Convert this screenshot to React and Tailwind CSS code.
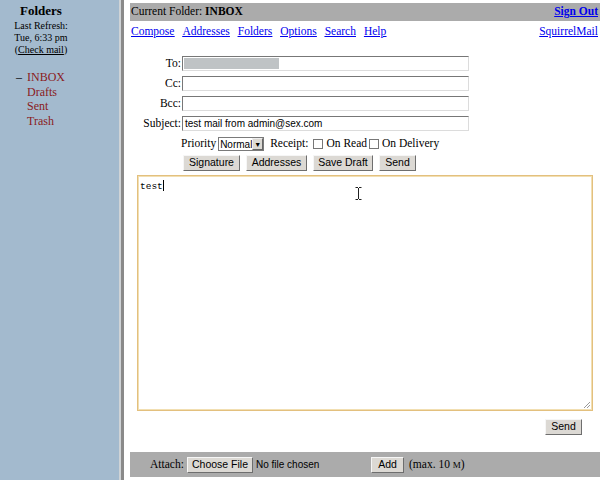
const serif = { fontFamily: '"Liberation Serif", "Times New Roman", serif' };

function Btn({ children, className = "" }) {
  return (
    <span
      className={`inline-flex h-[16px] shrink-0 items-center justify-center whitespace-nowrap border border-t-[#f6f6f6] border-l-[#f6f6f6] border-r-[#6e6e6e] border-b-[#6e6e6e] bg-[#dcd9d4] font-['Liberation_Sans',Arial,sans-serif] text-[10.5px] text-black ${className}`}
    >
      {children}
    </span>
  );
}

function Field({ label, children }) {
  return (
    <div className="flex h-[20px] items-start">
      <span className="w-[52px] pr-[1px] text-right text-[11.5px] leading-[15px]">{label}</span>
      <div className="flex h-[15px] w-[287px] items-center border border-t-[#777] border-l-[#777] border-r-[#dcdcdc] border-b-[#dcdcdc] bg-white font-['Liberation_Sans',Arial,sans-serif] text-[10px]">
        {children}
      </div>
    </div>
  );
}

function Box() {
  return <span className="inline-block h-[10px] w-[10px] shrink-0 border border-[#777] bg-white" />;
}

export default function App() {
  return (
    <div className="flex h-[480px] w-[600px] overflow-hidden bg-white text-black" style={serif}>
      <aside className="flex w-[119px] shrink-0 flex-col bg-[#a3bace] pt-[3px]">
        <div className="w-[82px] text-center">
          <div className="text-[13px] font-bold leading-[16px]">Folders</div>
          <div className="mt-[1px] text-[10px] leading-[12px]">Last Refresh:</div>
          <div className="text-[10px] leading-[12px]">Tue, 6:33 pm</div>
          <div className="text-[10px] leading-[12px]">
            (<span className="underline">Check mail</span>)
          </div>
        </div>
        <ul className="mt-[14px] pl-[16px] text-[12px] leading-[14.5px] text-[#8a1a22]">
          <li className="flex">
            <span className="w-[11px] text-black">–</span>
            <span>INBOX</span>
          </li>
          <li className="pl-[11px]">Drafts</li>
          <li className="pl-[11px]">Sent</li>
          <li className="pl-[11px]">Trash</li>
        </ul>
      </aside>
      <div className="w-[2px] shrink-0 bg-[#cfd3d6]" />
      <div className="w-[3px] shrink-0 bg-[#8a8a8a]" />

      <main className="flex min-w-0 flex-1 flex-col pl-[6px] pt-[3px]">
        <div className="flex h-[18px] items-center justify-between bg-[#ababab] pl-[1px] pr-[2px] text-[11.5px]">
          <span>
            Current Folder: <b>INBOX</b>
          </span>
          <a className="font-bold text-[#0000ee] underline">Sign Out</a>
        </div>
        <div className="mt-[3px] flex h-[14px] items-center justify-between pl-[1px] pr-[2px] text-[11.5px] leading-[14px]">
          <nav className="flex gap-[8px] text-[#0000ee] underline">
            <a>Compose</a>
            <a>Addresses</a>
            <a>Folders</a>
            <a>Options</a>
            <a>Search</a>
            <a>Help</a>
          </nav>
          <a className="text-[#0000ee] underline">SquirrelMail</a>
        </div>

        <div className="mt-[18px] flex flex-col">
          <Field label="To:">
            <span className="ml-[1px] h-[11px] w-[95px] bg-[#bfc3c5]" />
          </Field>
          <Field label="Cc:" />
          <Field label="Bcc:" />
          <Field label="Subject:">
            <span className="pl-[2px]">test mail from admin@sex.com</span>
          </Field>
        </div>

        <div className="mt-[1px] flex h-[14px] items-center pl-[51px] text-[11.5px]">
          <span>Priority</span>
          <span className="ml-[2px] flex h-[14px] w-[46px] items-center border border-[#7a7a7a] bg-white font-['Liberation_Sans',Arial,sans-serif] text-[10px]">
            <span className="flex-1 pl-[1px]">Normal</span>
            <span className="flex h-[12px] w-[13px] items-center justify-center border border-t-[#eee] border-l-[#eee] border-r-[#666] border-b-[#666] bg-[#dcd9d4] text-[7px] leading-none">
              ▼
            </span>
          </span>
          <span className="ml-[6px]">Receipt:</span>
          <span className="ml-[5px] flex items-center">
            <Box />
          </span>
          <span className="ml-[3px]">On Read</span>
          <span className="ml-[2px] flex items-center">
            <Box />
          </span>
          <span className="ml-[3px]">On Delivery</span>
        </div>

        <div className="mt-[4px] flex gap-[6px] pl-[53px]">
          <Btn className="w-[57px]">Signature</Btn>
          <Btn className="w-[61px]">Addresses</Btn>
          <Btn className="w-[60px]">Save Draft</Btn>
          <Btn className="w-[37px]">Send</Btn>
        </div>

        <div className="relative ml-[7px] mr-[7px] mt-[4px] h-[236px] border border-[#e3c07e] bg-white shadow-[inset_0_0_0_1px_#f2dfb2]">
          <div className="pl-[2px] pt-[4px] font-['Liberation_Mono','Courier_New',monospace] text-[9.5px] leading-[11px]">
            test<span className="inline-block h-[11px] w-px bg-black align-[-2px]" />
          </div>
          <svg className="absolute left-[217px] top-[11px]" width="7" height="13" viewBox="0 0 7 13">
            <path d="M0.5 0.5h2.5M4 0.5h2.5M3.5 1v11M0.5 12.5h2.5M4 12.5h2.5" stroke="#222" strokeWidth="1" fill="none" />
          </svg>
          <svg className="absolute bottom-[1px] right-[1px]" width="8" height="8" viewBox="0 0 8 8">
            <path d="M7 1L1 7M7 4L4 7" stroke="#999" strokeWidth="1" />
          </svg>
        </div>

        <div className="mt-[8px] flex justify-end pr-[18px]">
          <Btn className="w-[37px]">Send</Btn>
        </div>

        <div className="mt-[17px] flex h-[25px] items-center bg-[#ababab] pl-[20px] text-[11.5px]">
          <span className="w-[31px]">Attach:</span>
          <Btn className="ml-[6px] w-[66px]">Choose File</Btn>
          <span className="ml-[3px] w-[115px] font-['Liberation_Sans',Arial,sans-serif] text-[10px]">No file chosen</span>
          <Btn className="w-[33px]">Add</Btn>
          <span className="ml-[5px]">
            (max. 10 <span className="text-[9px]">M</span>)
          </span>
        </div>
      </main>
    </div>
  );
}
